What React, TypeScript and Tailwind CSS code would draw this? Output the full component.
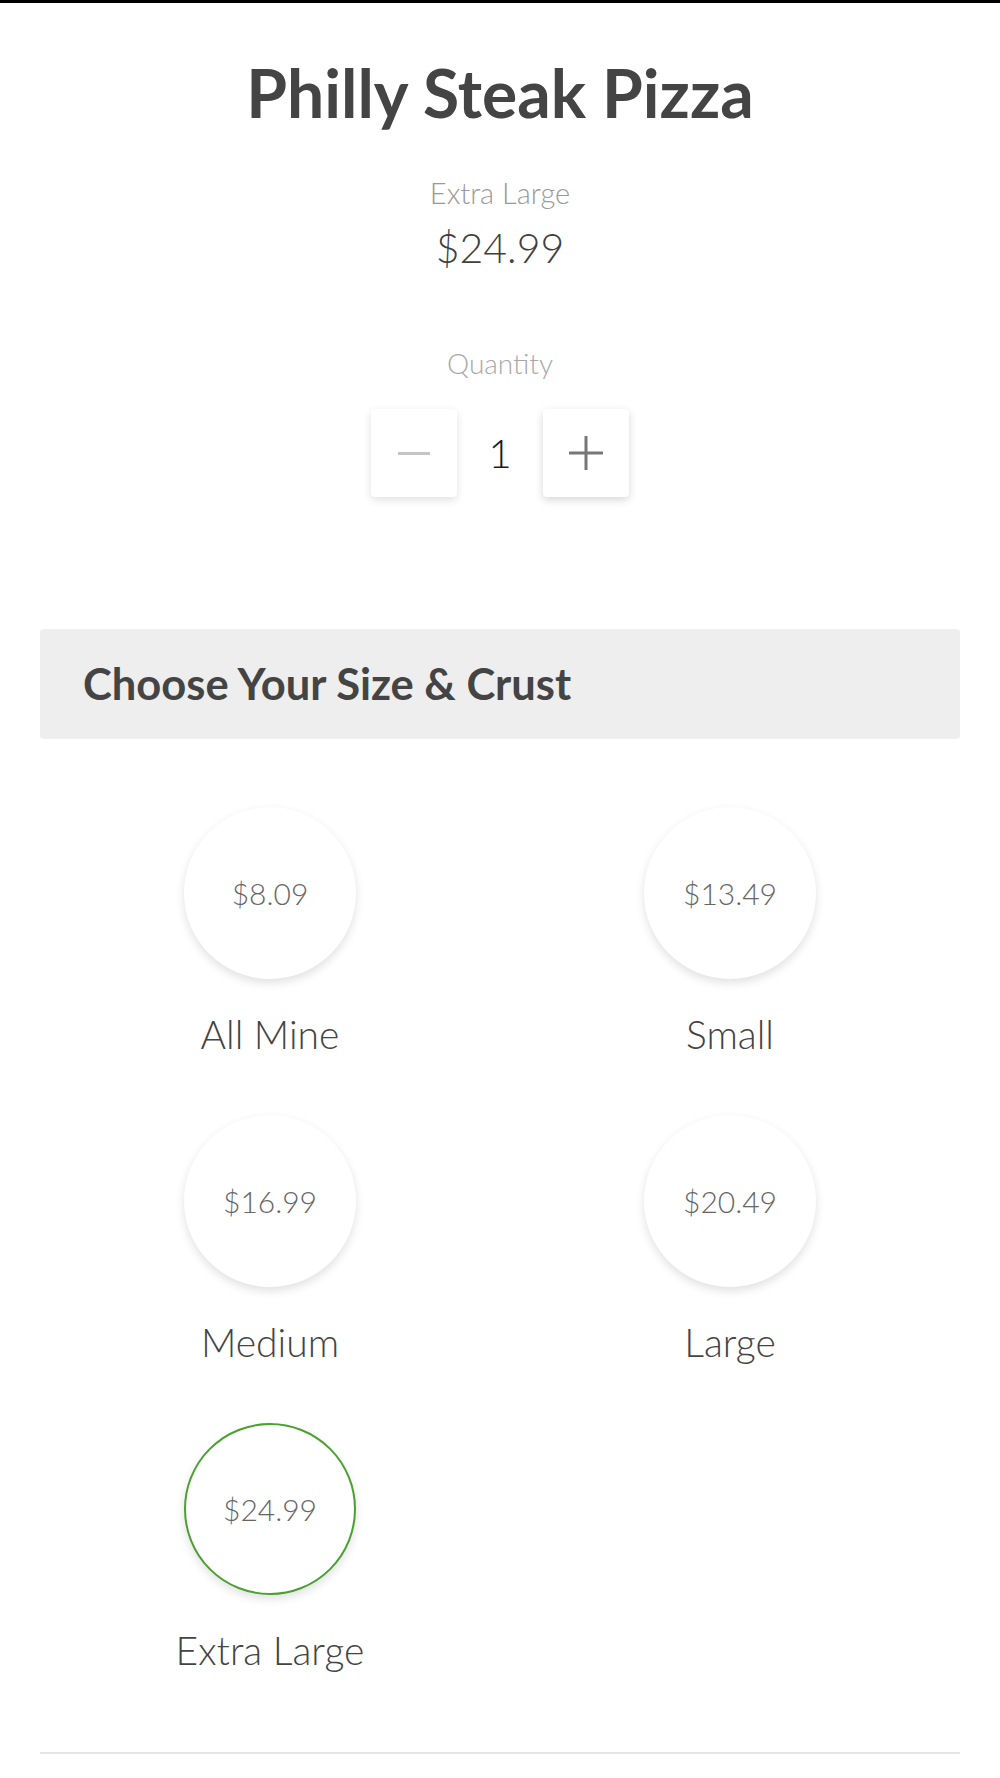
import React from "react";

const sizes = [
  { name: "All Mine", price: "$8.09", selected: false },
  { name: "Small", price: "$13.49", selected: false },
  { name: "Medium", price: "$16.99", selected: false },
  { name: "Large", price: "$20.49", selected: false },
  { name: "Extra Large", price: "$24.99", selected: true },
];

export default function App() {
  return (
    <div className="w-[1000px] min-h-[1778px] bg-white font-['Lato',sans-serif]">
      <div className="h-[3px] bg-black" />
      <div className="flex flex-col items-center">
        <h1 className="mt-[57px] text-[66px] leading-none font-bold text-[#444444]">
          Philly Steak Pizza
        </h1>
        <div className="mt-[52px] text-[29px] leading-none font-light text-[#9a9a9a]">
          Extra Large
        </div>
        <div className="mt-[20px] text-[41px] leading-none font-light text-[#3f3f3f]">
          $24.99
        </div>
        <div className="mt-[81px] text-[28px] leading-none font-light text-[#a8a8a8]">
          Quantity
        </div>
        <div className="mt-[32px] flex items-center">
          <button className="flex h-[88px] w-[86px] items-center justify-center rounded bg-white shadow-[0_3px_8px_rgba(0,0,0,0.12)]">
            <span className="block h-[3px] w-[32px] bg-[#c4c4c4]" />
          </button>
          <span className="w-[86px] text-center text-[40px] leading-none font-light text-[#1a1a1a]">
            1
          </span>
          <button className="flex h-[88px] w-[86px] items-center justify-center rounded bg-white shadow-[0_3px_8px_rgba(0,0,0,0.16)]">
            <svg width="34" height="34" viewBox="0 0 34 34">
              <path d="M17 0V34M0 17H34" stroke="#777777" strokeWidth="3" />
            </svg>
          </button>
        </div>
      </div>

      <div className="mx-[40px] mt-[132px] flex h-[110px] items-center rounded bg-[#eeeeee] pl-[43px]">
        <h2 className="text-[43.5px] leading-none font-bold text-[#444444]">
          Choose Your Size &amp; Crust
        </h2>
      </div>

      <div className="mx-[40px] mt-[68px] grid grid-cols-2 gap-y-[61px]">
        {sizes.map((s) => (
          <div key={s.name} className="flex flex-col items-center">
            <div
              className={
                s.selected
                  ? "flex h-[172px] w-[172px] items-center justify-center rounded-full border-2 border-[#4ca032] bg-white shadow-[0_4px_10px_rgba(0,0,0,0.12)]"
                  : "flex h-[172px] w-[172px] items-center justify-center rounded-full bg-white shadow-[0_4px_10px_rgba(0,0,0,0.12)]"
              }
            >
              <span className="text-[30px] leading-none font-light text-[#666666]">
                {s.price}
              </span>
            </div>
            <div className="mt-[36px] text-[39px] leading-none font-light text-[#444444]">
              {s.name}
            </div>
          </div>
        ))}
      </div>

      <div className="mx-[40px] mt-[82px] h-[2px] bg-[#e6e6e6]" />
    </div>
  );
}
